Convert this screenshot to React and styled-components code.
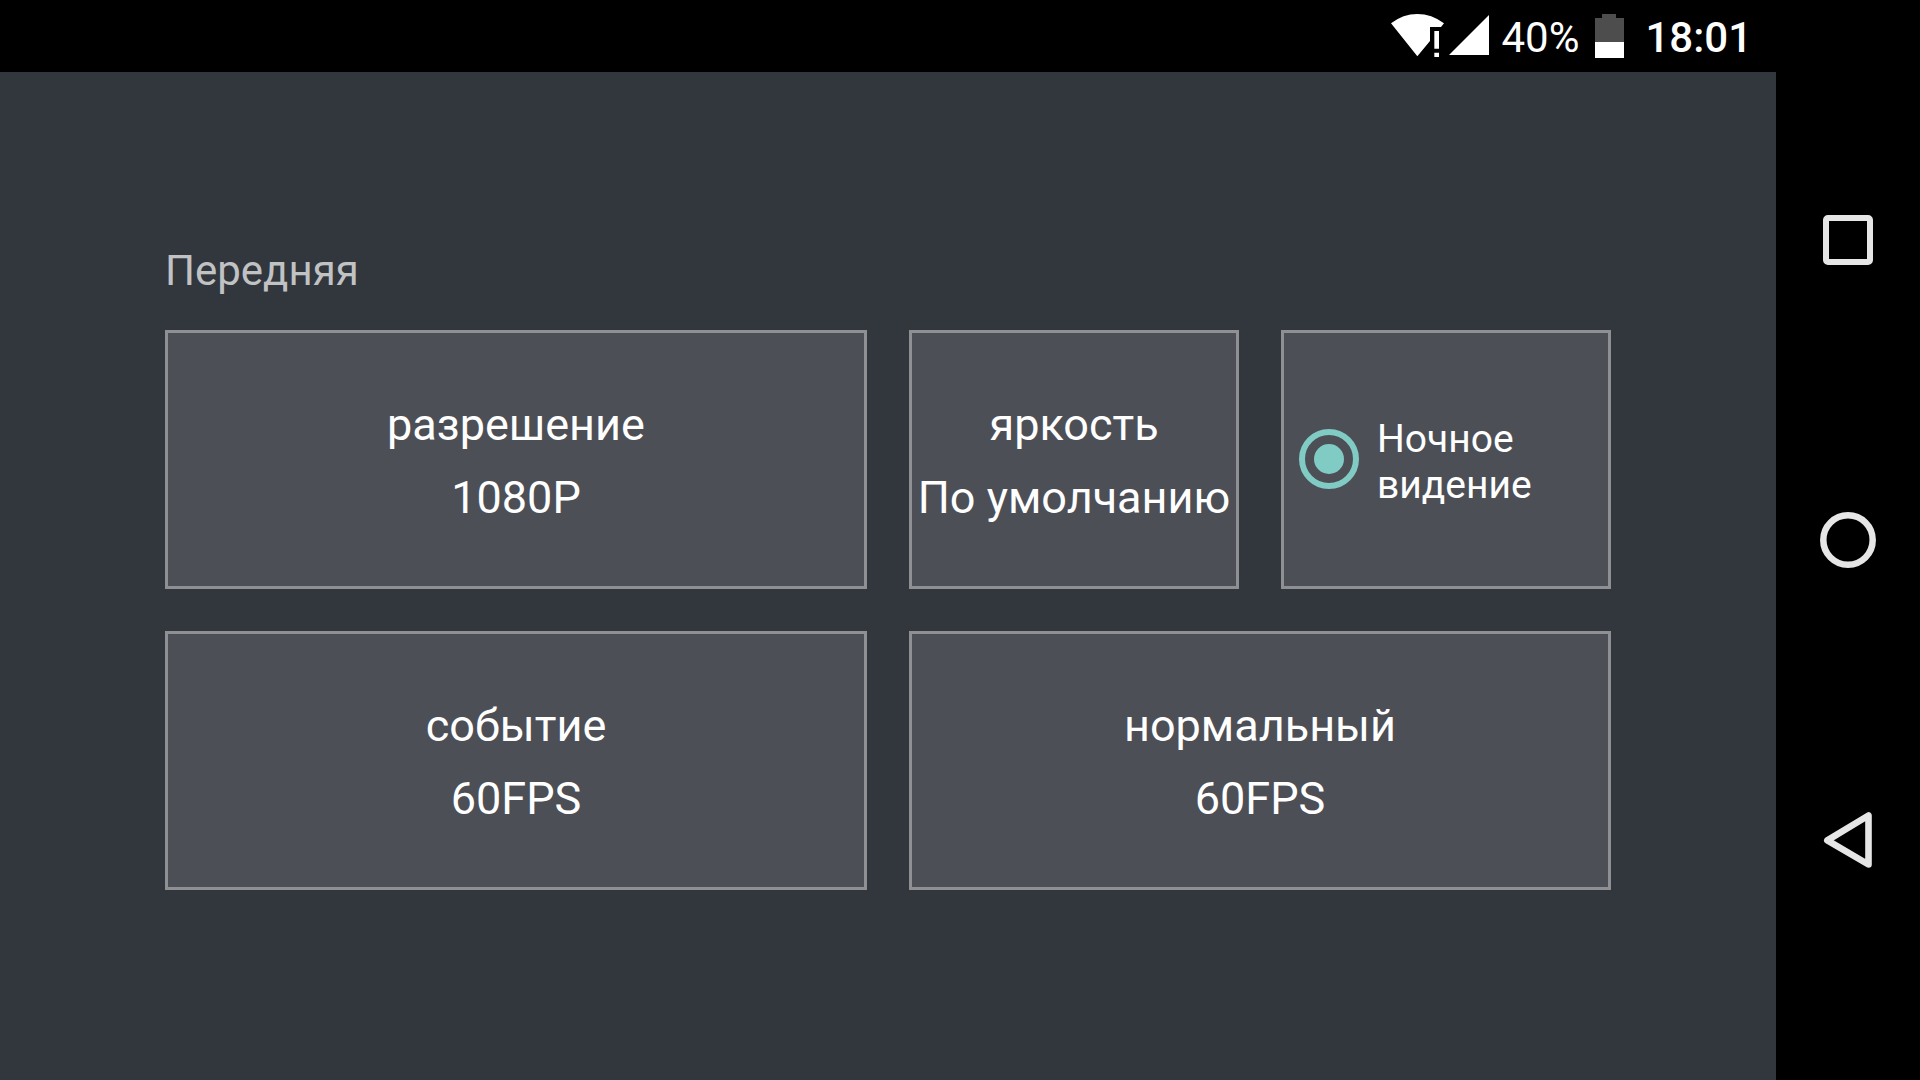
import React, { useState } from 'react';
import styled, { createGlobalStyle } from 'styled-components'

const GlobalStyle = createGlobalStyle`
  body {
    margin: 0;
    background: #000;
    font-family: Roboto, "Noto Sans", sans-serif;
    color: #fff;
  }
  * {
    box-sizing: border-box;
  }
`;

const Screen = styled.div`
  display: flex;
  min-height: 100vh;
`;

const Content = styled.div`
  flex: 1;
  display: flex;
  flex-direction: column;
`;

const StatusBar = styled.header`
  display: flex;
  justify-content: flex-end;
  align-items: center;
  height: 72px;
  padding-right: 24px;
  background: #000;
  font-size: 42px;
  line-height: 50px;
`;

const StatusIcon = styled.svg`
  display: block;
  margin-left: ${props => props.$gap || 0}px;
`;

const Percent = styled.span`
  margin: 4px 16px 0 12px;
`;

const Clock = styled.time`
  margin: 4px 0 0 21px;
  font-weight: 500;
`;

const Settings = styled.main`
  flex: 1;
  padding: 174px 165px 0;
  background: #32363d;
`;

const Title = styled.h1`
  margin: 0 0 35px;
  font-size: 42px;
  font-weight: 400;
  line-height: 49px;
  color: #c1c2c4;
`;

const Tiles = styled.div`
  display: grid;
  grid-template-columns: repeat(4, minmax(0, 1fr));
  grid-auto-rows: minmax(259px, auto);
  gap: 42px;
`;

const Tile = styled.button`
  grid-column: span ${props => props.$span};
  display: flex;
  flex-direction: column;
  align-items: center;
  justify-content: center;
  gap: 20px;
  padding: 3px 0 0;
  border: 3px solid #8e9094;
  background: #4d4f57;
  color: #fff;
  font-family: inherit;
  font-size: 45px;
  line-height: 53px;
  white-space: nowrap;
  cursor: pointer;
`;

const RadioTile = styled.label`
  display: flex;
  align-items: center;
  gap: 18px;
  padding: 0 15px 1px;
  border: 3px solid #8e9094;
  background: #4d4f57;
  font-size: 39px;
  line-height: 46px;
  cursor: pointer;
`;

const Radio = styled.input`
  appearance: none;
  flex: none;
  display: grid;
  place-items: center;
  width: 60px;
  height: 60px;
  margin: 0;
  border: 6px solid #80cbc4;
  border-radius: 50%;

  &:checked::before {
    content: '';
    width: 30px;
    height: 30px;
    border-radius: 50%;
    background: #80cbc4;
  }
`;

const RadioText = styled.span`
  padding-top: 5px;
`;

const NavBar = styled.nav`
  display: flex;
  flex-direction: column;
  width: 144px;
  padding: 90px 0;
  background: #000;
`;

const NavButton = styled.button`
  flex: 1;
  display: flex;
  align-items: center;
  justify-content: center;
  padding: 0;
  border: 0;
  background: none;
  cursor: pointer;
`;

const NavIcon = styled.svg`
  width: 60px;
  height: 60px;
  fill: none;
  stroke: #e6e6e6;
  stroke-linejoin: round;
`;

const tiles = [
  { name: 'разрешение', value: '1080P', span: 2 },
  { name: 'яркость', value: 'По умолчанию', span: 1 },
  { name: 'Ночное видение', radio: true },
  { name: 'событие', value: '60FPS', span: 2 },
  { name: 'нормальный', value: '60FPS', span: 2 },
]

const Status = () => (
  <StatusBar>
    <StatusIcon width="53" height="44" viewBox="0 0 159 132" fill="#fff">
      <path d="M0 28Q36 0 79 0T159 28L150 39H117V81L79 127Z" />
      <path d="M130 51h14v53h-14zM130 116h14v13h-14z" />
    </StatusIcon>
    <StatusIcon $gap={5} width="40" height="44" viewBox="0 0 40 44" fill="#fff">
      <path d="M0 41L40 1V41Z" />
    </StatusIcon>
    <Percent>40%</Percent>
    <StatusIcon width="29" height="44" viewBox="0 0 29 44">
      <path d="M7 0h14v4h8v24H0V4h7z" fill="#4d4d4d" />
      <path d="M0 28h29v16H0z" fill="#fff" />
    </StatusIcon>
    <Clock>18:01</Clock>
  </StatusBar>
)

const NightVision = (props) => {
  const [on, setOn] = useState(true)
  return (
    <RadioTile>
      <Radio type="radio" name="night" checked={on} onClick={() => setOn(!on)} onChange={() => {}} />
      <RadioText>{props.name}</RadioText>
    </RadioTile>
  )
}

const App = () => {
  return (
    <Screen>
      <GlobalStyle />
      <Content>
        <Status />
        <Settings>
          <Title>Передняя</Title>
          <Tiles>
            {tiles.map(tile => tile.radio ? <NightVision key={tile.name} name={tile.name} /> : (
              <Tile key={tile.name} type="button" $span={tile.span}>
                <span>{tile.name}</span>
                <span>{tile.value}</span>
              </Tile>
            ))}
          </Tiles>
        </Settings>
      </Content>
      <NavBar>
        <NavButton type="button" aria-label="Обзор">
          <NavIcon viewBox="0 0 60 60" strokeWidth="6">
            <rect x="8" y="8" width="44" height="44" rx="2" />
          </NavIcon>
        </NavButton>
        <NavButton type="button" aria-label="Домой">
          <NavIcon viewBox="0 0 60 60" strokeWidth="6.5">
            <circle cx="30" cy="30" r="24.7" />
          </NavIcon>
        </NavButton>
        <NavButton type="button" aria-label="Назад">
          <NavIcon viewBox="0 0 60 60" strokeWidth="6.6">
            <path d="M9.3 30.3L50.5 5.5V54.5Z" />
          </NavIcon>
        </NavButton>
      </NavBar>
    </Screen>
  )
}


export default App
